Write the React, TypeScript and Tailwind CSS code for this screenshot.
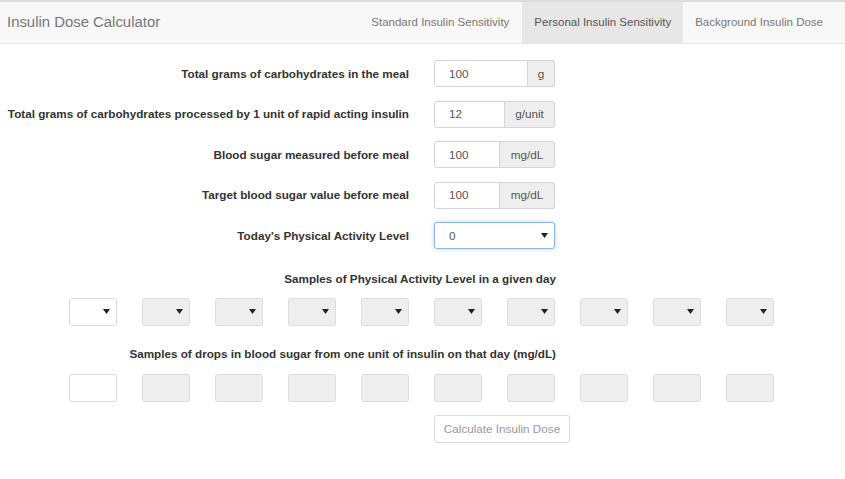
import React from 'react'

const font = { fontFamily: '"Liberation Sans", Arial, sans-serif' }

const rows = [
  { label: 'Total grams of carbohydrates in the meal', value: '100', unit: 'g', unitW: 'w-[27px]' },
  { label: 'Total grams of carbohydrates processed by 1 unit of rapid acting insulin', value: '12', unit: 'g/unit', unitW: 'w-[50px]' },
  { label: 'Blood sugar measured before meal', value: '100', unit: 'mg/dL', unitW: 'w-[55px]' },
  { label: 'Target blood sugar value before meal', value: '100', unit: 'mg/dL', unitW: 'w-[55px]' },
]

function Caret() {
  return (
    <svg width="7" height="5" viewBox="0 0 7 5" className="shrink-0">
      <path d="M0 0 H7 L3.5 5 Z" fill="#222" />
    </svg>
  )
}

export default function App() {
  const samples = Array.from({ length: 10 }, (_, i) => i)

  return (
    <div className="w-[845px] h-[479px] bg-white overflow-hidden text-[#333]" style={font}>
      {/* Navbar */}
      <div className="h-[44px] bg-[#f8f8f8] border-t-2 border-t-[#dcdcdc] border-b border-b-[#e7e7e7] flex items-stretch">
        <div className="pl-[7px] flex items-center text-[14.9px] text-[#777] flex-1">Insulin Dose Calculator</div>
        <div className="flex items-stretch text-[11.5px] text-[#777]">
          <div className="px-[13px] flex items-center">Standard Insulin Sensitivity</div>
          <div className="px-[12px] flex items-center bg-[#e7e7e7] text-[#555]">Personal Insulin Sensitivity</div>
          <div className="pl-[12px] pr-[22px] flex items-center">Background Insulin Dose</div>
        </div>
      </div>

      {/* Form */}
      <div className="pt-[16px] flex flex-col gap-[13.5px]">
        {rows.map((r) => (
          <div key={r.label} className="flex items-center">
            <div className="w-[409px] text-right font-bold text-[11.7px]">{r.label}</div>
            <div className="ml-[25px] w-[121px] h-[27px] flex">
              <div className="flex-1 border border-[#d4d4d4] rounded-l-[3px] bg-white flex items-center pl-[14px] text-[11.7px] text-[#555]">{r.value}</div>
              <div className={`${r.unitW} border border-l-0 border-[#d4d4d4] rounded-r-[3px] bg-[#eee] flex items-center justify-center text-[11.7px] text-[#555]`}>{r.unit}</div>
            </div>
          </div>
        ))}
        <div className="flex items-center">
          <div className="w-[409px] text-right font-bold text-[11.7px]">Today's Physical Activity Level</div>
          <div className="ml-[25px] w-[121px] h-[27px] border border-[#8fb5de] rounded-[3px] shadow-[0_0_4px_rgba(102,175,233,0.5)] bg-white flex items-center justify-between pl-[14px] pr-[6px] text-[11.7px] text-[#555]">
            <span>0</span>
            <Caret />
          </div>
        </div>
      </div>

      {/* Activity samples */}
      <div className="mt-[21px] flex flex-col">
        <div className="w-[556px] text-right font-bold text-[11.7px]">Samples of Physical Activity Level in a given day</div>
        <div className="mt-[10px] pl-[69px] flex gap-[25px]">
          {samples.map((i) => (
            <div
              key={i}
              className={`w-[48px] h-[28px] border border-[#dcdcdc] rounded-[3px] flex items-center justify-end pr-[6px] ${i === 0 ? 'bg-white' : 'bg-[#eee]'}`}
            >
              <Caret />
            </div>
          ))}
        </div>
      </div>

      {/* Drop samples */}
      <div className="mt-[19px] flex flex-col">
        <div className="w-[556px] text-right font-bold text-[11.7px]">Samples of drops in blood sugar from one unit of insulin on that day (mg/dL)</div>
        <div className="mt-[12px] pl-[69px] flex gap-[25px]">
          {samples.map((i) => (
            <div
              key={i}
              className={`w-[48px] h-[28px] border border-[#dcdcdc] rounded-[3px] ${i === 0 ? 'bg-white' : 'bg-[#eee]'}`}
            />
          ))}
        </div>
        <div className="mt-[13px] pl-[434px]">
          <div className="w-[136px] h-[28px] border border-[#dcdcdc] rounded-[3px] bg-white flex items-center justify-center text-[11.7px] text-[#999]">
            Calculate Insulin Dose
          </div>
        </div>
      </div>
    </div>
  )
}
